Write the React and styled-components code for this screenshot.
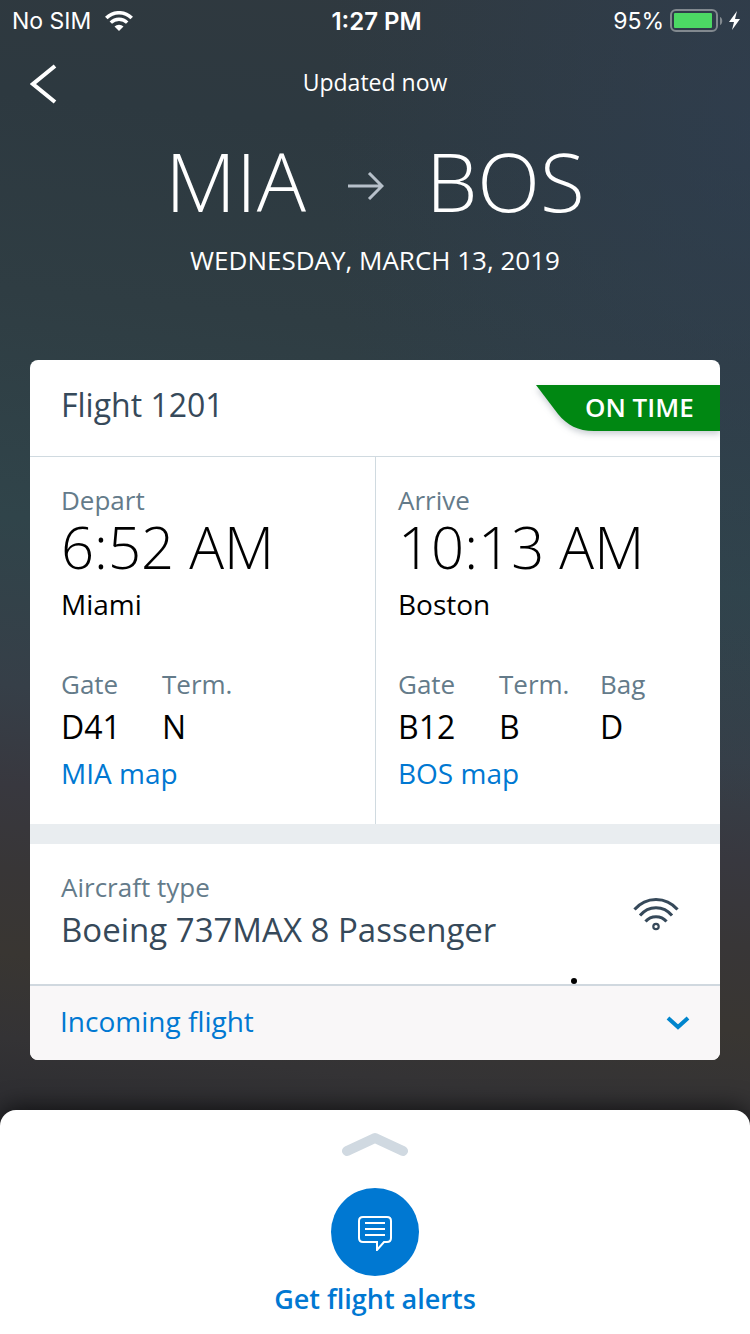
import React from 'react';
import styled, { createGlobalStyle } from 'styled-components';

const GlobalStyle = createGlobalStyle`
  * {
    box-sizing: border-box;
  }
  body {
    margin: 0;
    background-color: #2d2d31;
    font-family: 'Open Sans', 'Noto Sans', sans-serif;
  }
  button {
    border: none;
    padding: 0;
    background: none;
    font-family: inherit;
    cursor: pointer;
  }
`;

const Page = styled.div`
  display: flex;
  flex-direction: column;
  min-height: 100vh;
  background:
    radial-gradient(ellipse at 100% 10%, #30405599 0%, #30405500 40%),
    linear-gradient(
      186deg,
      #30393f 0%,
      #2d3940 12%,
      #2f3d43 26%,
      #30444a 42%,
      #363f48 54%,
      #38383f 61%,
      #383637 67%,
      #393632 73%,
      #343335 79%,
      #2d2d31 84%
    );
`;

const StatusBar = styled.div`
  display: grid;
  grid-template-columns: 1fr auto 1fr;
  align-items: center;
  height: 42px;
  padding: 0 9px 0 12px;
  color: white;
  font-family: Inter, sans-serif;
  font-size: 23px;
`;
const StatusGroup = styled.div`
  display: flex;
  align-items: center;
  justify-content: ${(props) => (props.$end ? 'flex-end' : 'flex-start')};
  gap: ${(props) => (props.$end ? '6px' : '14px')};
`;
const Clock = styled.div`
  font-size: 24px;
  font-weight: 600;
`;

const TopBar = styled.header`
  display: grid;
  grid-template-columns: 1fr auto 1fr;
  align-items: center;
  height: 84px;
  padding: 0 30px;
  color: white;
  font-size: 23px;
`;
const BackButton = styled.button`
  justify-self: start;
  height: 40px;
`;
const Updated = styled.span`
  height: 36px;
  line-height: 32px;
`;

const Route = styled.h1`
  display: flex;
  justify-content: center;
  gap: 42px;
  height: 118px;
  margin: 0;
  color: white;
  font-size: 82px;
  font-weight: 350;
  line-height: 108px;
`;
const RouteArrow = styled.svg`
  margin-top: 46px;
`;
const FlightDate = styled.div`
  height: 32px;
  color: white;
  font-size: 26px;
  line-height: 32px;
  text-align: center;
`;

const Card = styled.main`
  margin: 84px 30px 50px;
  border-radius: 8px;
  background-color: white;
  overflow: hidden;
`;
const CardHeader = styled.div`
  display: flex;
  justify-content: space-between;
  height: 97px;
  padding: 25px 0 0 31px;
  border-bottom: 1px solid #d0dae0;
`;
const FlightNumber = styled.h2`
  margin: 0;
  color: #36495a;
  font-size: 32px;
  font-weight: 400;
  line-height: 40px;
`;
const StatusTag = styled.div`
  display: grid;
  width: 184px;
  height: 56px;
  color: white;
  font-size: 26px;
  font-weight: 600;
  line-height: 44px;
  & > * {
    grid-area: 1 / 1;
  }
`;
const TagShape = styled.svg`
  filter: drop-shadow(0 3px 3px #36495a44);
`;
const StatusText = styled.span`
  z-index: 1;
  padding-left: 49px;
`;

const Legs = styled.div`
  display: grid;
  grid-template-columns: 1fr 1fr;
`;
const Leg = styled.section`
  height: 367px;
  padding: 27px 0 0 ${(props) => (props.$divided ? '22px' : '31px')};
  border-left: ${(props) => (props.$divided ? '1px solid #d0dae0' : 'none')};
`;
const Label = styled.div`
  color: #647b8a;
  font-size: 26px;
  line-height: 32px;
`;
const Time = styled.div`
  font-size: 58px;
  font-weight: 350;
  line-height: 62px;
`;
const City = styled.div`
  font-size: 28px;
  line-height: 52px;
`;
const Places = styled.div`
  display: grid;
  grid-template-columns: repeat(3, 101px);
  margin-top: 38px;
`;
const PlaceValue = styled.div`
  font-size: 32px;
  line-height: 54px;
`;
const MapLink = styled.a`
  color: #0078d2;
  font-size: 28px;
  line-height: 38px;
  text-decoration: none;
`;

const Aircraft = styled.section`
  position: relative;
  display: flex;
  justify-content: space-between;
  align-items: center;
  height: 162px;
  padding: 0 41px 0 31px;
  border-top: 20px solid #e9edf0;
  border-bottom: 2px solid #d0d8df;
`;
const AircraftName = styled.div`
  color: #36495a;
  font-size: 33px;
  line-height: 54px;
`;
const Dot = styled.span`
  position: absolute;
  right: 143px;
  bottom: 0;
  width: 6px;
  height: 6px;
  border-radius: 50%;
  background-color: black;
`;
const IncomingButton = styled.button`
  display: flex;
  justify-content: space-between;
  align-items: center;
  width: 100%;
  height: 74px;
  padding: 0 30px;
  background-color: #f9f7f8;
  color: #0078d2;
  font-size: 28px;
  line-height: 38px;
`;
const IncomingText = styled.span`
  padding-bottom: 4px;
`;

const Sheet = styled.footer`
  display: flex;
  flex-direction: column;
  align-items: center;
  flex-grow: 1;
  padding-top: 22px;
  border-radius: 16px 16px 0 0;
  background-color: white;
  box-shadow: 0 -2px 24px #000a;
`;
const AlertsButton = styled.button`
  display: flex;
  flex-direction: column;
  align-items: center;
  margin-top: 30px;
  color: #0078d2;
  font-size: 27px;
  font-weight: 600;
  line-height: 46px;
`;
const AlertsCircle = styled.span`
  display: flex;
  justify-content: center;
  align-items: center;
  width: 88px;
  height: 88px;
  border-radius: 50%;
  background-color: #0078d2;
`;

const legs = [
  {
    title: 'Depart',
    time: '6:52 AM',
    city: 'Miami',
    places: [
      ['Gate', 'D41'],
      ['Term.', 'N'],
    ],
    map: 'MIA map',
  },
  {
    title: 'Arrive',
    time: '10:13 AM',
    city: 'Boston',
    places: [
      ['Gate', 'B12'],
      ['Term.', 'B'],
      ['Bag', 'D'],
    ],
    map: 'BOS map',
  },
];

const SignalIcon = () => (
  <svg width="28" height="20" viewBox="0 0 28 20" fill="none">
    <path d="M1.300 7a18 18 0 0 1 25.400 0" stroke="white" strokeWidth="3.600" />
    <path d="M5.800 11.600a11.600 11.600 0 0 1 16.400 0" stroke="white" strokeWidth="3.400" />
    <path d="M9.500 15.500a6.500 6.500 0 0 1 9 0L14 20z" fill="white" />
  </svg>
);

const BatteryIcon = () => (
  <svg width="71" height="24" viewBox="0 0 71 24" fill="none">
    <rect x="1" y="1" width="46" height="21" rx="5" stroke="#82898f" strokeWidth="2" />
    <rect x="4" y="4" width="38" height="15" rx="1" fill="#4cd964" />
    <path d="M50 8v8c3-1 3-7 0-8z" fill="#82898f" />
    <path d="M67 2l-8 11h5l-2 8 8-11h-5z" fill="white" />
  </svg>
);

const CabinWifiIcon = () => (
  <svg width="46" height="34" viewBox="0 0 46 34" fill="none" stroke="#36495a" strokeWidth="3">
    <path d="M1.500 12.500C13 -1 33 -1 44.500 12.500" />
    <path d="M7 18.500C15.500 8 30.500 8 39 18.500" />
    <path d="M12.500 24.500C18 18 28 18 33.500 24.500" />
    <circle cx="23" cy="29.500" r="2.700" strokeWidth="2.200" />
  </svg>
);

const App = () => {
  return (
    <>
      <GlobalStyle />
      <Page>
        <StatusBar>
          <StatusGroup>
            No SIM
            <SignalIcon />
          </StatusGroup>
          <Clock>1:27 PM</Clock>
          <StatusGroup $end>
            95%
            <BatteryIcon />
          </StatusGroup>
        </StatusBar>
        <TopBar>
          <BackButton aria-label="Back">
            <svg width="28" height="40" viewBox="0 0 28 40" fill="none">
              <path d="M25 2L3 20l22 18" stroke="white" strokeWidth="4" />
            </svg>
          </BackButton>
          <Updated>Updated now</Updated>
        </TopBar>
        <Route>
          MIA
          <RouteArrow width="36" height="28" viewBox="0 0 36 28" fill="none">
            <path d="M0 14h34M21 1l13 13-13 13" stroke="#b7c0ca" strokeWidth="3" />
          </RouteArrow>
          BOS
        </Route>
        <FlightDate>WEDNESDAY, MARCH 13, 2019</FlightDate>

        <Card>
          <CardHeader>
            <FlightNumber>Flight 1201</FlightNumber>
            <StatusTag>
              <TagShape width="184" height="56" viewBox="0 0 184 56">
                <path d="M0 0H184V46H58C42 46 31 40 22 29z" fill="#008712" />
              </TagShape>
              <StatusText>ON TIME</StatusText>
            </StatusTag>
          </CardHeader>
          <Legs>
            {legs.map((leg, index) => (
              <Leg key={leg.title} $divided={index > 0}>
                <Label>{leg.title}</Label>
                <Time>{leg.time}</Time>
                <City>{leg.city}</City>
                <Places>
                  {leg.places.map(([label, value]) => (
                    <div key={label}>
                      <Label>{label}</Label>
                      <PlaceValue>{value}</PlaceValue>
                    </div>
                  ))}
                </Places>
                <MapLink href="#map">{leg.map}</MapLink>
              </Leg>
            ))}
          </Legs>
          <Aircraft>
            <div>
              <Label>Aircraft type</Label>
              <AircraftName>Boeing 737MAX 8 Passenger</AircraftName>
            </div>
            <CabinWifiIcon />
            <Dot />
          </Aircraft>
          <IncomingButton>
            <IncomingText>Incoming flight</IncomingText>
            <svg width="24" height="16" viewBox="0 0 24 16" fill="none">
              <path d="M2 3l10 9 10-9" stroke="#0085cd" strokeWidth="4" />
            </svg>
          </IncomingButton>
        </Card>

        <Sheet>
          <svg width="66" height="26" viewBox="0 0 66 26" fill="none">
            <path
              d="M5 19L33 6l28 13"
              stroke="#d0d9e1"
              strokeWidth="10"
              strokeLinecap="round"
              strokeLinejoin="round"
            />
          </svg>
          <AlertsButton>
            <AlertsCircle>
              <svg width="36" height="38" viewBox="0 0 36 38" fill="none" stroke="white" strokeWidth="2">
                <path d="M6 4h24q4 0 4 4v17q0 4-4 4h-3l-7 8v-8H6q-4 0-4-4V8q0-4 4-4z" />
                <path d="M8 10h20M8 16h20M8 22h20" />
              </svg>
            </AlertsCircle>
            Get flight alerts
          </AlertsButton>
        </Sheet>
      </Page>
    </>
  );
};

export default App;
